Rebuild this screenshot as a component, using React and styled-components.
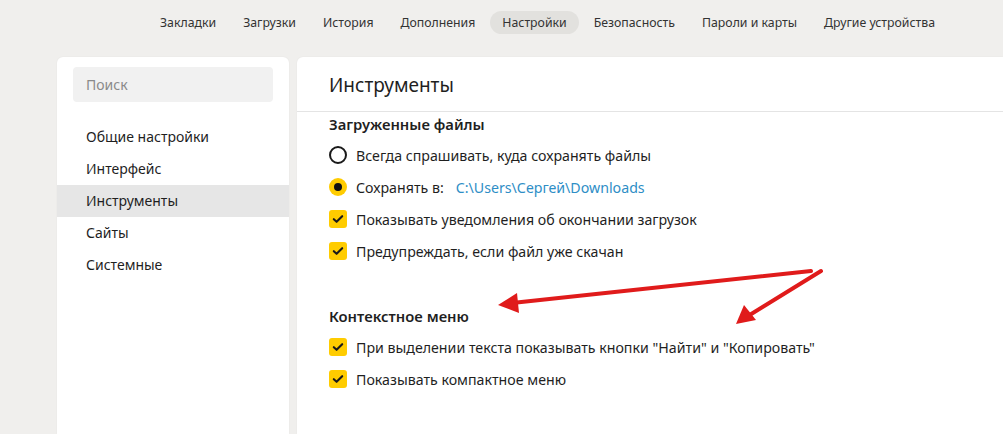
import React from "react";
import styled, { createGlobalStyle } from "styled-components";

const Global = createGlobalStyle`
  html, body { margin: 0; padding: 0; }
  body {
    background: #f0efed;
    font-family: "Noto Sans", "Open Sans", sans-serif;
    color: #1f1f1f;
    width: 1003px;
    height: 434px;
    overflow: hidden;
  }
`;

const Page = styled.div`
  position: relative;
  width: 1003px;
  height: 434px;
  display: flex;
  flex-direction: column;
`;

const TopNav = styled.nav`
  height: 44px;
  display: flex;
  align-items: center;
  gap: 3px;
  padding-left: 148px;
  box-sizing: border-box;
`;

const NavItem = styled.div`
  font-size: 12.3px;
  color: #333;
  padding: 0 12px;
  height: 23px;
  line-height: 23px;
  border-radius: 12px;
  background: ${(p) => (p.$active ? "#e2e1de" : "transparent")};
  white-space: nowrap;
`;

const Body = styled.div`
  flex: 1;
  display: flex;
  gap: 8px;
  padding: 13px 0 0 57px;
`;

const Sidebar = styled.aside`
  width: 232px;
  background: #fff;
  border-radius: 6px 6px 0 0;
  box-shadow: 0 0 2px rgba(0, 0, 0, 0.06);
  padding-top: 10px;
  display: flex;
  flex-direction: column;
`;

const Search = styled.div`
  margin: 0 16px;
  height: 35px;
  border-radius: 4px;
  background: #f1f1f1;
  color: #8a8a8a;
  font-size: 14px;
  line-height: 35px;
  padding-left: 13px;
`;

const Menu = styled.div`
  margin-top: 19px;
  display: flex;
  flex-direction: column;
`;

const MenuItem = styled.div`
  height: 32px;
  line-height: 32px;
  padding-left: 29px;
  font-size: 14px;
  color: #1f1f1f;
  background: ${(p) => (p.$active ? "#e6e6e6" : "transparent")};
`;

const Main = styled.main`
  flex: 1;
  background: #fff;
  border-radius: 6px 0 0 0;
  box-shadow: 0 0 2px rgba(0, 0, 0, 0.06);
  display: flex;
  flex-direction: column;
`;

const Header = styled.div`
  height: 55px;
  border-bottom: 1px solid #e4e4e4;
  display: flex;
  align-items: center;
  padding-left: 32px;
  padding-top: 2px;
  box-sizing: border-box;
  font-size: 19px;
  color: #1f1f1f;
`;

const Content = styled.div`
  padding: 2px 0 0 32px;
  display: flex;
  flex-direction: column;
`;

const Section = styled.section`
  display: flex;
  flex-direction: column;
  margin-bottom: ${(p) => p.$mb || 0}px;
`;

const SectionTitle = styled.div`
  font-size: 14.8px;
  font-weight: 600;
  height: 20px;
  line-height: 20px;
  margin-bottom: 5px;
  color: #1f1f1f;
`;

const Row = styled.div`
  height: 32px;
  display: flex;
  align-items: center;
  gap: 9px;
  font-size: 14.2px;
  color: #1f1f1f;
`;

const RadioCircle = styled.span`
  width: 18px;
  height: 18px;
  box-sizing: border-box;
  border-radius: 50%;
  flex: none;
  display: flex;
  align-items: center;
  justify-content: center;
  border: ${(p) => (p.$on ? "none" : "2px solid #1a1a1a")};
  background: ${(p) => (p.$on ? "#ffcc00" : "#fff")};
  &::after {
    content: "";
    display: ${(p) => (p.$on ? "block" : "none")};
    width: 8px;
    height: 8px;
    border-radius: 50%;
    background: #111;
  }
`;

const CheckBox = styled.span`
  width: 18px;
  height: 18px;
  border-radius: 3px;
  background: #ffcc00;
  flex: none;
  display: flex;
  align-items: center;
  justify-content: center;
`;

const Link = styled.span`
  color: #2e8ec6;
  margin-left: 3px;
`;

const Arrows = styled.svg`
  position: absolute;
  left: 0;
  top: 0;
  pointer-events: none;
`;

const Check = () => (
  <svg width="12" height="10" viewBox="0 0 12 10">
    <path d="M1.8 5.2 L4.6 7.8 L10.2 2.2" fill="none" stroke="#1a1a1a" strokeWidth="2.1" strokeLinecap="round" strokeLinejoin="round" />
  </svg>
);

const navItems = ["Закладки", "Загрузки", "История", "Дополнения", "Настройки", "Безопасность", "Пароли и карты", "Другие устройства"];
const menuItems = ["Общие настройки", "Интерфейс", "Инструменты", "Сайты", "Системные"];

export default function App() {
  return (
    <Page>
      <Global />
      <TopNav>
        {navItems.map((n) => (
          <NavItem key={n} $active={n === "Настройки"}>{n}</NavItem>
        ))}
      </TopNav>
      <Body>
        <Sidebar>
          <Search>Поиск</Search>
          <Menu>
            {menuItems.map((m) => (
              <MenuItem key={m} $active={m === "Инструменты"}>{m}</MenuItem>
            ))}
          </Menu>
        </Sidebar>
        <Main>
          <Header>Инструменты</Header>
          <Content>
            <Section $mb={39}>
              <SectionTitle>Загруженные файлы</SectionTitle>
              <Row><RadioCircle />Всегда спрашивать, куда сохранять файлы</Row>
              <Row><RadioCircle $on />Сохранять в:<Link>C:\Users\Сергей\Downloads</Link></Row>
              <Row><CheckBox><Check /></CheckBox>Показывать уведомления об окончании загрузок</Row>
              <Row><CheckBox><Check /></CheckBox>Предупреждать, если файл уже скачан</Row>
            </Section>
            <Section>
              <SectionTitle>Контекстное меню</SectionTitle>
              <Row><CheckBox><Check /></CheckBox>При выделении текста показывать кнопки "Найти" и "Копировать"</Row>
              <Row><CheckBox><Check /></CheckBox>Показывать компактное меню</Row>
            </Section>
          </Content>
        </Main>
      </Body>
      <Arrows width="1003" height="434" viewBox="0 0 1003 434">
        <g stroke="#e01b1b" strokeWidth="4" strokeLinecap="round" fill="none">
          <line x1="811" y1="271" x2="512" y2="303" />
          <line x1="821" y1="271" x2="748" y2="316" />
        </g>
        <g fill="#e01b1b">
          <polygon points="498,305 517,293 519,313" />
          <polygon points="736,324 744,305 756,320" />
        </g>
      </Arrows>
    </Page>
  );
}
